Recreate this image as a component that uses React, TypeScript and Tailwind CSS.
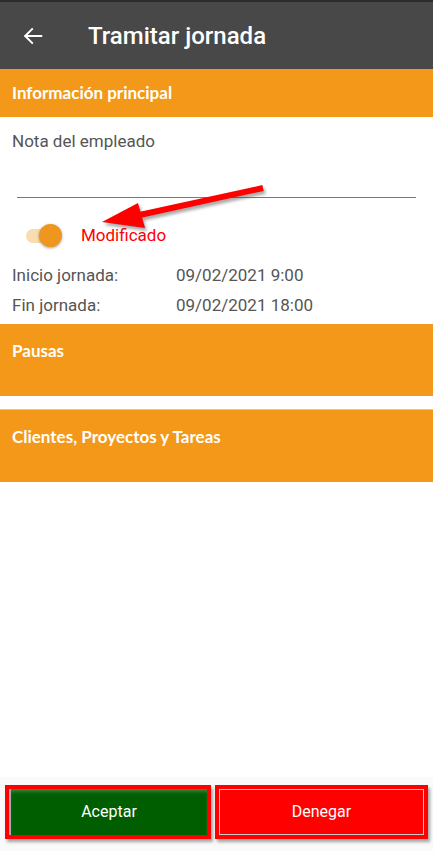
import React from "react";

/* Tramitar jornada — approval screen for a modified work day */

function BackArrow() {
  return (
    <svg width="22" height="22" viewBox="0 0 24 24" fill="none" stroke="white" strokeWidth="2.2" strokeLinecap="square">
      <line x1="4" y1="12" x2="21" y2="12" />
      <polyline points="11,4.5 3.5,12 11,19.5" fill="none" />
    </svg>
  );
}

function Annotation() {
  // red callout arrow pointing at the toggle label
  return (
    <svg
      className="pointer-events-none absolute left-[95px] top-[176px]"
      width="180"
      height="64"
      viewBox="0 0 180 64"
    >
      <defs>
        <filter id="sh" x="-20%" y="-20%" width="140%" height="140%">
          <feGaussianBlur stdDeviation="1.5" />
        </filter>
      </defs>
      <g filter="url(#sh)" opacity="0.45" transform="translate(2,3)">
        <line x1="168" y1="12" x2="40" y2="40" stroke="#444" strokeWidth="6" />
        <polygon points="7,46 43,27 50,52" fill="#444" />
      </g>
      <line x1="168" y1="12" x2="40" y2="40" stroke="#ff0000" strokeWidth="6" />
      <polygon points="7,46 43,27 50,52" fill="#ff0000" />
    </svg>
  );
}

function Section({ title, tall }: { title: string; tall?: boolean }) {
  return (
    <div
      className={
        tall
          ? "h-[72px] bg-[#f39819] px-3 pt-[16px]"
          : "flex h-[48px] items-center bg-[#f39819] px-3"
      }
    >
      <span className="font-['Lato'] text-[17px] font-bold leading-5 text-white">{title}</span>
    </div>
  );
}

function Row({ label, value }: { label: string; value: string }) {
  return (
    <div className="flex h-[30px] items-center px-3 text-[17px] text-[#555]">
      <span className="w-[164px]">{label}</span>
      <span>{value}</span>
    </div>
  );
}

export default function App() {
  return (
    <div className="relative flex h-[851px] w-[433px] flex-col overflow-hidden bg-white font-['Roboto',sans-serif]">
      <div className="h-[2px] bg-[#2b2b2b]" />

      {/* App bar */}
      <header className="flex h-[67px] items-center bg-[#484848] pl-[22px]">
        <BackArrow />
        <h1 className="ml-[44px] text-[24px] font-medium text-white">Tramitar jornada</h1>
      </header>

      <Section title="Información principal" />

      {/* Employee note */}
      <div className="px-3 pt-[14px] text-[17px] leading-5 text-[#555]">Nota del empleado</div>
      <div className="mx-[17px] mt-[46px] h-px bg-[#7a7a7a]" />

      {/* Modified switch */}
      <div className="flex h-[76px] items-center pl-[26px]">
        <div className="relative h-[24px] w-[36px]">
          <div className="absolute left-0 top-[5px] h-[14px] w-[32px] rounded-full bg-[#f9dcb0]" />
          <div className="absolute left-[13px] top-0 h-[23px] w-[23px] rounded-full bg-[#ef961f] shadow-[0_1px_3px_rgba(0,0,0,0.35)]" />
        </div>
        <span className="ml-[19px] text-[17px] text-[#ff0000]">Modificado</span>
      </div>

      <div className="-mt-[13px]">
        <Row label="Inicio jornada:" value="09/02/2021 9:00" />
        <Row label="Fin jornada:" value="09/02/2021 18:00" />
      </div>

      <div className="mt-[3px]">
        <Section title="Pausas" tall />
      </div>
      <div className="mt-[13px] h-px bg-[#f6c27a]" />
      <Section title="Clientes, Proyectos y Tareas" tall />

      <div className="flex-1" />

      {/* Action bar */}
      <div className="flex h-[74px] gap-[4px] bg-[#fafafa] px-[5px] pt-[8px]">
        <button className="h-[54px] w-[206px] border-4 border-[#ff0000] shadow-[2px_3px_3px_rgba(0,0,0,0.35)]">
          <div className="flex h-full items-center justify-center border-l-2 border-[#a8a8a8] bg-[#005e00] text-[16px] text-white shadow-[inset_0_4px_4px_-2px_rgba(255,255,255,0.3)]">
            Aceptar
          </div>
        </button>
        <button className="h-[54px] w-[213px] border-4 border-[#ff0000] shadow-[2px_3px_3px_rgba(0,0,0,0.35)]">
          <div className="flex h-full items-center justify-center border border-[#c8c8c8] bg-[#ff0000] text-[16px] text-white">
            Denegar
          </div>
        </button>
      </div>

      <Annotation />
    </div>
  );
}
